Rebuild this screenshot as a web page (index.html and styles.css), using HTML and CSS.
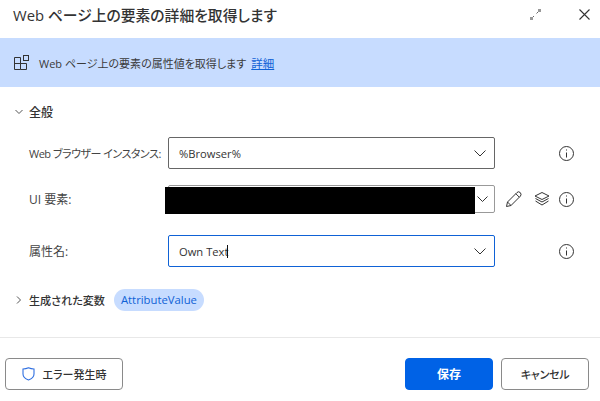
FILE: index.html
```html
<!DOCTYPE html>
<html lang="ja">
<head>
  <meta charset="UTF-8">
  <title>Web ページ上の要素の詳細を取得します</title>
  <link rel="stylesheet" href="styles.css">
</head>
<body>
  <div class="dialog">
    <header class="title-bar">
      <h1>Web ページ上の要素の詳細を取得します</h1>
      <svg class="icon-expand" width="11" height="11" viewBox="0 0 11 11">
        <path d="M1.500 9.500 L4 7 M6.500 4.500 L9.500 1.500" stroke="#666" fill="none"/>
        <rect x="0" y="8" width="3" height="3" fill="#999"/>
        <rect x="8" y="0" width="3" height="3" fill="#999"/>
      </svg>
      <svg class="icon-close" width="11" height="11" viewBox="0 0 11 11">
        <path d="M0.500 0.500 L10.500 10.500 M10.500 0.500 L0.500 10.500" stroke="#333" stroke-width="1.100" fill="none"/>
      </svg>
    </header>

    <div class="banner">
      <svg width="15" height="15" viewBox="0 0 15 15">
        <path d="M0.500 2.500 H6.500 V14.500 H0.500 Z M0.500 8.500 H12.500 V14.500 H6.500" stroke="#333" fill="none"/>
        <rect x="9.500" y="0.500" width="5" height="5" stroke="#333" fill="none"/>
      </svg>
      <span>Web ページ上の要素の属性値を取得します</span>
      <a href="#">詳細</a>
    </div>

    <div class="section-head general">
      <svg class="chevron" width="8" height="8" viewBox="0 0 8 8"><path d="M0.500 2 L4 5.500 L7.500 2" stroke="#555" fill="none"/></svg>
      <span>全般</span>
    </div>

    <div class="form">
      <div class="form-row">
        <label class="label-tight">Web ブラウザー インスタンス:</label>
        <div class="select">
          <span>%Browser%</span>
          <svg class="caret" width="12" height="7" viewBox="0 0 12 7"><path d="M0.500 0.500 L6 6 L11.500 0.500" stroke="#333" fill="none"/></svg>
        </div>
        <div class="actions">
          <svg class="info" width="15" height="15" viewBox="0 0 15 15"><circle cx="7.500" cy="7.500" r="7" stroke="#333" fill="none"/><path d="M7.500 6.500 V11.500" stroke="#333" fill="none"/><rect x="7" y="3.500" width="1" height="1" fill="#333"/></svg>
        </div>
      </div>

      <div class="form-row form-row-short">
        <label>UI 要素:</label>
        <div class="select select-short">
          <div class="redacted"></div>
          <svg class="caret" width="11" height="6" viewBox="0 0 11 6"><path d="M0.500 0.500 L5.500 5.500 L10.500 0.500" stroke="#333" fill="none"/></svg>
        </div>
        <div class="actions">
          <svg class="pencil" width="16" height="16" viewBox="0 0 16 16"><path d="M0.500 15.500 L1.500 11 L11 1.500 Q12.500 0 14.200 1.500 Q15.800 3.200 14.500 5 L5 14.500 Z M1.500 11 L5 14.500 M9.800 2.700 L13.300 6.200" stroke="#333" fill="none"/></svg>
          <svg width="16" height="14" viewBox="0 0 16 14"><path d="M8 0.500 L15 4 L8 7.500 L1 4 Z M1.500 6.500 L8 10 L14.500 6.500 M1.500 9 L8 13 L14.500 9" stroke="#333" fill="none"/></svg>
          <svg class="info" width="15" height="15" viewBox="0 0 15 15"><circle cx="7.500" cy="7.500" r="7" stroke="#333" fill="none"/><path d="M7.500 6.500 V11.500" stroke="#333" fill="none"/><rect x="7" y="3.500" width="1" height="1" fill="#333"/></svg>
        </div>
      </div>

      <div class="form-row">
        <label>属性名:</label>
        <div class="select select-focus">
          <span>Own Text</span><i class="cursor"></i>
          <svg class="caret" width="12" height="7" viewBox="0 0 12 7"><path d="M0.500 0.500 L6 6 L11.500 0.500" stroke="#333" fill="none"/></svg>
        </div>
        <div class="actions">
          <svg class="info" width="15" height="15" viewBox="0 0 15 15"><circle cx="7.500" cy="7.500" r="7" stroke="#333" fill="none"/><path d="M7.500 6.500 V11.500" stroke="#333" fill="none"/><rect x="7" y="3.500" width="1" height="1" fill="#333"/></svg>
        </div>
      </div>
    </div>

    <div class="section-head vars">
      <svg class="chevron" width="8" height="8" viewBox="0 0 8 8"><path d="M2 0.500 L5.500 4 L2 7.500" stroke="#555" fill="none"/></svg>
      <span class="vars-name">生成された変数</span>
      <span class="pill">AttributeValue</span>
    </div>

    <footer>
      <button class="btn btn-error">
        <svg width="13" height="14" viewBox="0 0 13 14"><path d="M1 2 Q4 2 6.500 0.800 Q9 2 12 2 V7 Q12 11 6.500 13 Q1 11 1 7 Z" stroke="#2f6fe0" stroke-width="1.100" fill="none"/></svg>
        <span>エラー発生時</span>
      </button>
      <button class="btn btn-save">保存</button>
      <button class="btn btn-cancel">キャンセル</button>
    </footer>
  </div>
</body>
</html>
```

FILE: styles.css
```css
html, body {
  margin: 0;
  padding: 0;
}
body {
  width: 600px;
  height: 401px;
  overflow: hidden;
  background: #fff;
  color: #333;
  font-family: 'Open Sans', 'Noto Sans CJK JP', sans-serif;
  font-size: 12px;
  font-feature-settings: "palt";
}
.dialog {
  display: flex;
  flex-direction: column;
  height: 401px;
}
.title-bar {
  display: flex;
  align-items: center;
  height: 38px;
  padding: 0 10px 10px 13px;
  box-sizing: border-box;
}
.title-bar h1 {
  flex: 1;
  margin: 0;
  font-size: 14.800px;
  font-weight: 500;
  color: #333;
}
.icon-close {
  margin-left: 38px;
}
.banner {
  display: flex;
  align-items: center;
  height: 49px;
  padding-left: 14px;
  background: #c7dcff;
  color: #3a3a3a;
}
.banner span {
  margin-left: 10px;
  font-size: 11px;
}
.banner a {
  margin-left: 5px;
  color: #0f62d6;
  font-size: 11.500px;
}
.section-head {
  display: flex;
  align-items: center;
  padding-left: 15px;
  font-weight: 500;
}
.chevron {
  margin-right: 6px;
}
.general {
  height: 20px;
  margin-top: 15px;
}
.form {
  margin-top: 15px;
  padding-left: 29px;
}
.form-row {
  display: grid;
  grid-template-columns: 139px 327px 79px;
  align-items: center;
  height: 32px;
  margin-bottom: 16px;
}
.form-row-short {
  height: 28px;
  margin-bottom: 22px;
}
.form-row label {
  color: #444;
  white-space: nowrap;
}
.form-row .label-tight {
  font-size: 11px;
  letter-spacing: -0.500px;
}
.select {
  position: relative;
  display: flex;
  align-items: center;
  justify-content: space-between;
  height: 100%;
  padding: 0 8px 0 10px;
  box-sizing: border-box;
  border: 1px solid #666;
  border-radius: 2px;
  font-size: 11.200px;
}
.select-short {
  justify-content: flex-end;
  padding-right: 6px;
  border-color: #999;
}
.select-focus {
  justify-content: flex-start;
  border-color: #0f62d6;
}
.select-focus .caret {
  margin-left: auto;
}
.cursor {
  width: 1px;
  height: 13px;
  margin-left: -1px;
  background: #111;
}
.redacted {
  position: absolute;
  left: -4px;
  top: 1px;
  width: 310px;
  height: 27px;
  background: #000;
}
.actions {
  display: flex;
  align-items: center;
  justify-content: flex-end;
  gap: 9px;
}
.pencil {
  margin-right: 3px;
}
.vars {
  height: 22px;
  margin-top: 6px;
}
.vars-name {
  font-size: 11.100px;
}
.pill {
  margin-left: 9px;
  padding: 0 7px;
  height: 22px;
  line-height: 22px;
  border-radius: 11px;
  background: #c7dcff;
  color: #0f62d6;
  font-size: 11.300px;
  font-weight: 400;
}
footer {
  display: flex;
  align-items: center;
  margin-top: 26px;
  padding: 20px 11px 0 5px;
  border-top: 1px solid #e8e8e8;
}
.btn {
  height: 32px;
  box-sizing: border-box;
  border: 1px solid #8a8a8a;
  border-radius: 4px;
  background: #fff;
  color: #333;
  font-family: inherit;
  font-size: 11px;
  font-weight: 500;
  font-feature-settings: "palt";
}
.btn-error {
  display: flex;
  align-items: center;
  justify-content: center;
  gap: 8px;
  width: 118px;
  margin-right: auto;
}
.btn-save {
  width: 88px;
  margin-right: 8px;
  border-color: #0062e6;
  background: #0062e6;
  color: #fff;
  font-size: 12px;
  font-weight: 700;
}
.btn-cancel {
  width: 88px;
  letter-spacing: -0.300px;
}
```
